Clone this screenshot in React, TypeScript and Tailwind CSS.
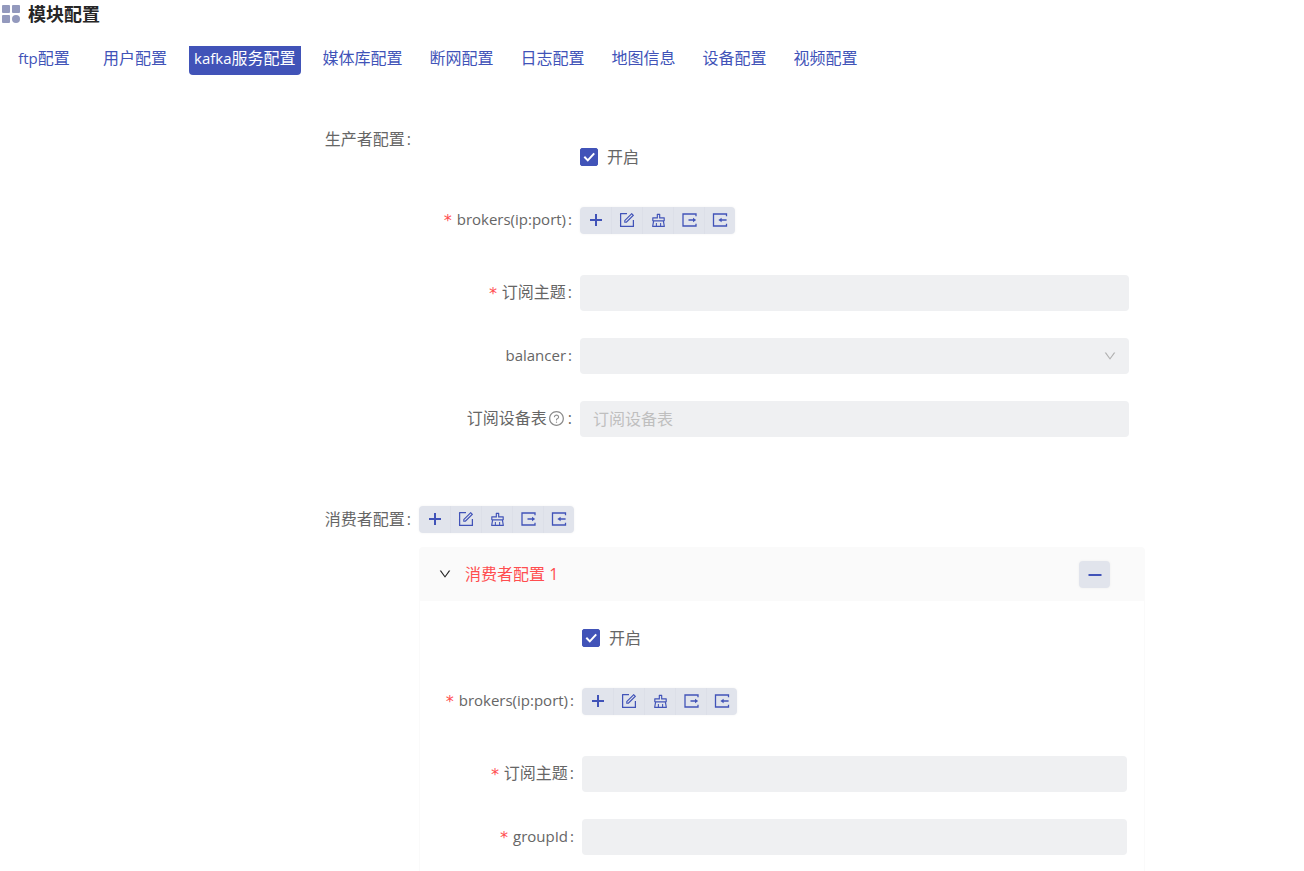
import { useState, type ReactNode } from "react";
import { AiOutlineClear, AiOutlineDown, AiOutlineForm, AiOutlineQuestionCircle } from "react-icons/ai";

const tabs = [
  { latin: "ftp", text: "配置" },
  { latin: "", text: "用户配置" },
  { latin: "kafka", text: "服务配置" },
  { latin: "", text: "媒体库配置" },
  { latin: "", text: "断网配置" },
  { latin: "", text: "日志配置" },
  { latin: "", text: "地图信息" },
  { latin: "", text: "设备配置" },
  { latin: "", text: "视频配置" },
];

type IconProps = { className?: string };

function PlusIcon({ className }: IconProps) {
  return (
    <svg viewBox="0 0 16 16" aria-hidden="true" className={className} fill="currentColor">
      <path d="M7 2h2v5h5v2H9v5H7V9H2V7h5z" />
    </svg>
  );
}

function MinusIcon({ className }: IconProps) {
  return (
    <svg viewBox="0 0 16 16" aria-hidden="true" className={className} fill="currentColor">
      <path d="M1.5 8h13v2h-13z" />
    </svg>
  );
}

function ExportIcon({ className }: IconProps) {
  return (
    <svg viewBox="0 0 16 16" aria-hidden="true" className={className}>
      <path d="M15 4.2V2H2v12h13v-2.2" fill="none" stroke="currentColor" strokeWidth="1.3" />
      <path d="M7.5 8H13" fill="none" stroke="currentColor" strokeWidth="1.3" />
      <path d="M12 5.8 15.2 8 12 10.2z" fill="currentColor" />
    </svg>
  );
}

function ImportIcon({ className }: IconProps) {
  return (
    <svg viewBox="0 0 16 16" aria-hidden="true" className={className}>
      <path d="M14.5 4.2V2h-13v12h13v-2.2" fill="none" stroke="currentColor" strokeWidth="1.3" />
      <path d="M9 8h5.6" fill="none" stroke="currentColor" strokeWidth="1.3" />
      <path d="M9.6 5.8 6.4 8l3.2 2.2z" fill="currentColor" />
    </svg>
  );
}

const actions = [
  { label: "新增", Icon: PlusIcon, size: "size-4" },
  { label: "编辑", Icon: AiOutlineForm, size: "size-[18px]" },
  { label: "清空", Icon: AiOutlineClear, size: "size-[17px]" },
  { label: "导出", Icon: ExportIcon, size: "size-4" },
  { label: "导入", Icon: ImportIcon, size: "size-4" },
];

function Toolbar({ label }: { label: string }) {
  return (
    <div
      role="group"
      aria-label={label}
      className="flex h-[27px] w-fit overflow-hidden rounded bg-[#e1e4ec] shadow-[0_0_3px_rgba(0,0,0,0.05)]"
    >
      {actions.map(({ label: name, Icon, size }) => (
        <button
          key={name}
          type="button"
          aria-label={name}
          className="flex w-[31px] items-center justify-center border-l border-[#dcdfe8] text-[#4153b8] first:border-l-0"
        >
          <Icon className={size} />
        </button>
      ))}
    </div>
  );
}

function LabelText({
  children,
  required,
  help,
}: {
  children: ReactNode;
  required?: boolean;
  help?: boolean;
}) {
  return (
    <>
      {required && (
        <span aria-hidden="true" className="mr-1 pt-1 font-['DejaVu_Sans_Mono',monospace] text-base text-[#ff4d4f]">
          *
        </span>
      )}
      <span>{children}</span>
      {help && <AiOutlineQuestionCircle className="mx-px size-[17px] text-[#8c8c8c]" />}
      <span className="ml-0.5">:</span>
    </>
  );
}

function Row({
  id,
  label,
  required,
  help,
  latin,
  inCard,
  children,
}: {
  id?: string;
  label?: string;
  required?: boolean;
  help?: boolean;
  latin?: boolean;
  inCard?: boolean;
  children: ReactNode;
}) {
  const columns = inCard ? "grid-cols-[162fr_545fr]" : "grid-cols-[161fr_549fr]";
  const size = latin ? "text-[15px]" : "text-base";
  const cell = `flex items-center justify-end pr-2 pb-0.5 ${size}`;
  return (
    <div className={`grid h-9 items-center ${columns}`}>
      {label === undefined ? (
        <span />
      ) : id ? (
        <label htmlFor={id} className={cell}>
          <LabelText required={required} help={help}>
            {label}
          </LabelText>
        </label>
      ) : (
        <div className={cell}>
          <LabelText required={required}>{label}</LabelText>
        </div>
      )}
      {children}
    </div>
  );
}

function TextField({ id, placeholder }: { id: string; placeholder?: string }) {
  return (
    <input
      id={id}
      type="text"
      placeholder={placeholder}
      className="h-9 w-full rounded bg-[#eff0f2] px-[13px] text-base outline-none placeholder:text-[#bfbfbf]"
    />
  );
}

function Enable() {
  return (
    <label className="flex w-fit items-center gap-[9px]">
      <span className="relative flex size-[18px]">
        <input
          type="checkbox"
          defaultChecked
          className="peer size-[18px] appearance-none rounded-xs border border-[#c4c8d4] checked:border-[#4153b8] checked:bg-[#4153b8]"
        />
        <svg
          viewBox="0 0 18 18"
          aria-hidden="true"
          className="pointer-events-none absolute inset-0 hidden size-[18px] peer-checked:block"
        >
          <path d="M4.3 8.8 7.8 12.4 14.2 5.4" fill="none" stroke="#fff" strokeWidth="2" />
        </svg>
      </span>
      <span>开启</span>
    </label>
  );
}

export default function App() {
  const [active, setActive] = useState(2);
  const [open, setOpen] = useState(true);

  return (
    <main className="bg-white font-['Open_Sans','Noto_Sans_CJK_SC',sans-serif] text-base leading-6 text-[#666]">
      <header className="flex h-7 items-center gap-2 pl-0.5">
        <svg viewBox="0 0 18 18" aria-hidden="true" className="size-[18px] fill-[#9399bd]">
          <rect width="8" height="8" rx="1" />
          <rect x="10" width="8" height="8" rx="1" />
          <rect y="10" width="8" height="8" rx="1" />
          <circle cx="14" cy="14" r="4" />
        </svg>
        <h1 className="text-lg font-bold text-[#262626]">模块配置</h1>
      </header>

      <nav className="mt-[18px] flex gap-[17px] pl-[7px]">
        {tabs.map(({ latin, text }, index) => (
          <button
            key={text + latin}
            type="button"
            aria-current={index === active ? "page" : undefined}
            onClick={() => setActive(index)}
            className={
              index === active
                ? "h-[29px] min-w-[74px] rounded-b bg-[#4153b8] px-[5px] pb-2 whitespace-nowrap text-white"
                : "h-[29px] min-w-[74px] px-[5px] pb-2 whitespace-nowrap text-[#4153b8]"
            }
          >
            {latin && <span className="text-[15px]">{latin}</span>}
            {text}
          </button>
        ))}
      </nav>

      <form className="mt-[47px]">
        <section className="grid grid-cols-[419fr_726fr_159fr] items-start">
          <div className="flex h-9 items-center justify-end pr-2 pb-0.5">
            <LabelText>生产者配置</LabelText>
          </div>
          <div className="flex flex-col gap-[27px] pt-[17px] pr-4">
            <Row>
              <Enable />
            </Row>
            <div className="pb-[10px]">
              <Row label="brokers(ip:port)" required latin>
                <Toolbar label="生产者 brokers" />
              </Row>
            </div>
            <Row id="producer-topic" label="订阅主题" required>
              <TextField id="producer-topic" />
            </Row>
            <Row id="balancer" label="balancer" latin>
              <div className="relative">
                <select
                  id="balancer"
                  defaultValue=""
                  className="block h-9 w-full appearance-none rounded bg-[#eff0f2] px-[13px] outline-none"
                >
                  <option value="" />
                </select>
                <AiOutlineDown className="pointer-events-none absolute top-[11px] right-3 size-3.5 text-[#b0b0b0]" />
              </div>
            </Row>
            <Row id="device-table" label="订阅设备表" help>
              <TextField id="device-table" placeholder="订阅设备表" />
            </Row>
          </div>
        </section>

        <section className="mt-16 grid grid-cols-[419fr_726fr_159fr] items-start">
          <div className="flex h-9 items-center justify-end pr-2">
            <LabelText>消费者配置</LabelText>
          </div>
          <div>
            <div className="flex h-9 items-center">
              <Toolbar label="消费者配置" />
            </div>
            <div className="mt-[10px]">
              <div className="flex h-[54px] items-center justify-between rounded-t bg-[#fafafa] pr-[35px] pl-[19px]">
                <button
                  type="button"
                  aria-expanded={open}
                  onClick={() => setOpen(!open)}
                  className="flex items-center gap-[13px] text-[#ff4d4f]"
                >
                  <AiOutlineDown className="size-3.5 text-[#262626]" />
                  消费者配置 1
                </button>
                <button
                  type="button"
                  aria-label="删除"
                  className="flex h-[27px] w-[31px] items-center justify-center rounded bg-[#e1e4ec] text-[#4153b8] shadow-[0_0_3px_rgba(0,0,0,0.05)]"
                >
                  <MinusIcon className="size-4" />
                </button>
              </div>
              {open && (
                <div className="flex flex-col gap-[27px] border-x border-[#fafafa] pt-[19px] pr-[17px] pb-4">
                  <Row inCard>
                    <Enable />
                  </Row>
                  <div className="pb-[10px]">
                    <Row label="brokers(ip:port)" required latin inCard>
                      <Toolbar label="消费者 brokers" />
                    </Row>
                  </div>
                  <Row id="consumer-topic" label="订阅主题" required inCard>
                    <TextField id="consumer-topic" />
                  </Row>
                  <Row id="group-id" label="groupId" required latin inCard>
                    <TextField id="group-id" />
                  </Row>
                </div>
              )}
            </div>
          </div>
        </section>
      </form>
    </main>
  );
}
